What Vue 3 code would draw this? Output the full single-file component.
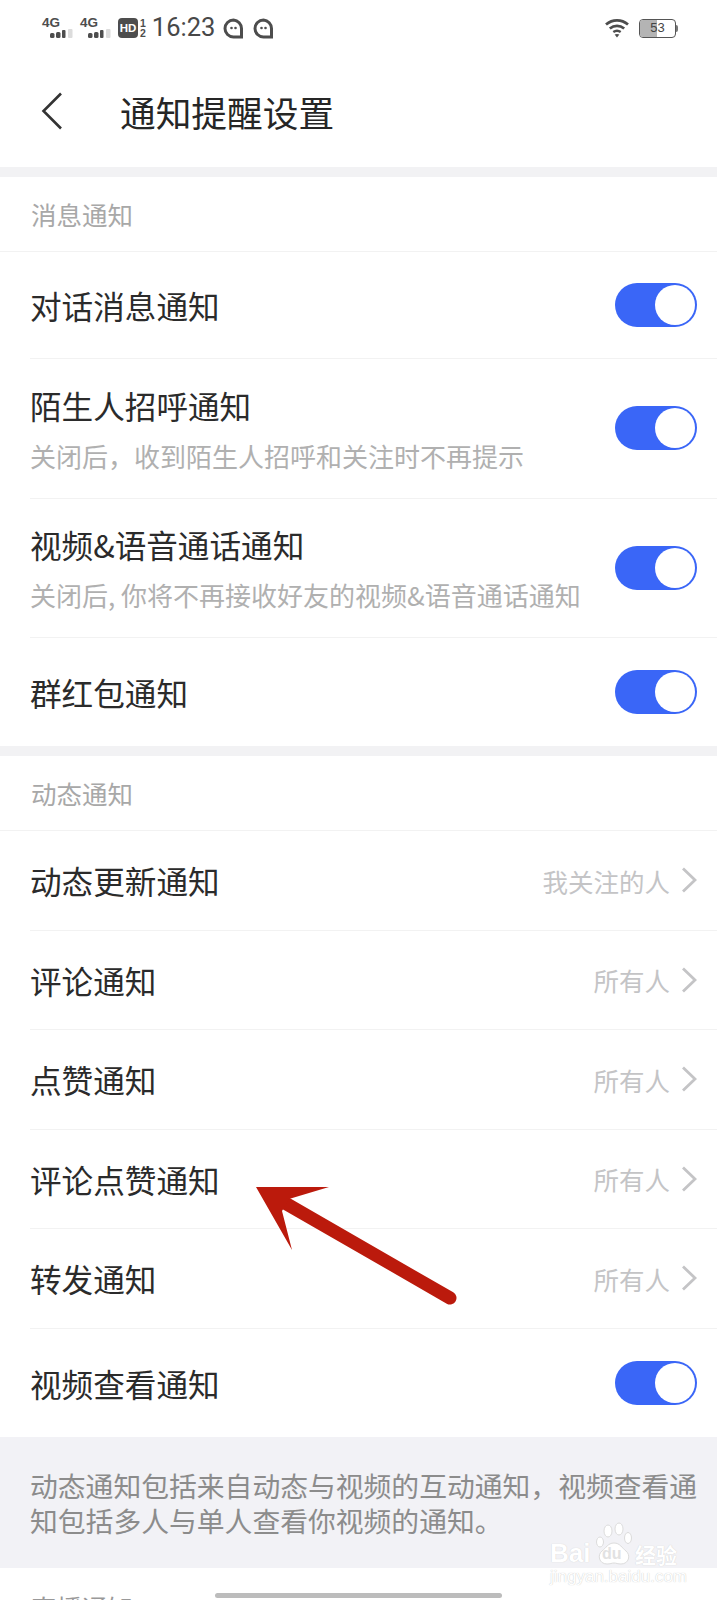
<template>
  <div class="page">
    <!-- Status bar -->
    <div class="status-bar">
      <div class="status-left">
        <div v-for="n in 2" :key="n" class="signal">
          <span class="signal-label">4G</span>
          <svg width="23" height="9" viewBox="0 0 23 9">
            <rect x="0" y="4" width="4.500" height="5" rx="1.500" fill="#4d4d4d" />
            <rect x="6" y="3" width="4.500" height="6" rx="1.500" fill="#4d4d4d" />
            <rect x="12" y="1" width="3.500" height="8" rx="1" fill="#4d4d4d" />
            <rect x="18" y="0" width="4.500" height="9" rx="1" fill="#dcdcdc" />
          </svg>
        </div>
        <span class="hd">HD</span>
        <span class="sim"><span>1</span><span>2</span></span>
        <span class="time">16:23</span>
        <svg v-for="n in 2" :key="'g' + n" class="ghost" width="21" height="21" viewBox="0 0 21 21">
          <path d="M10.500 2a8.500 8.500 0 1 0 0 17h8v-8.500a8.500 8.500 0 0 0-8-8.500z" fill="none" stroke="#4d4d4d" stroke-width="3" />
          <circle cx="8.500" cy="10" r="1.300" fill="#4d4d4d" />
          <circle cx="12.500" cy="10" r="1.300" fill="#4d4d4d" />
        </svg>
      </div>
      <div class="status-right">
        <svg width="24" height="20" viewBox="0 0 24 20">
          <path d="M1 6.500c6.500-5.500 15.500-5.500 22 0" fill="none" stroke="#4d4d4d" stroke-width="2.800" />
          <path d="M4.800 10.500c4.300-3.500 10.100-3.500 14.400 0" fill="none" stroke="#4d4d4d" stroke-width="2.800" />
          <path d="M8.300 14c2.200-1.600 5.200-1.600 7.400 0" fill="none" stroke="#4d4d4d" stroke-width="2.400" />
          <path d="M12 19.500l-2.400-3c1.500-.8 3.300-.8 4.800 0z" fill="#4d4d4d" />
        </svg>
        <div class="battery">
          <div class="battery-body">
            <div class="battery-fill"></div>
            <span class="battery-text">53</span>
          </div>
          <div class="battery-tip"></div>
        </div>
      </div>
    </div>

    <!-- Title bar -->
    <div class="title-bar">
      <svg class="back" width="22" height="38" viewBox="0 0 22 38">
        <path d="M20 1.500L2.500 19 20 36.500" fill="none" stroke="#333" stroke-width="2.600" />
      </svg>
      <span class="title">通知提醒设置</span>
    </div>

    <div class="band"></div>
    <div class="section-head">消息通知</div>
    <div class="rows">
      <div v-for="item in messageRows" :key="item.name" :class="['row', { tall: item.desc }]">
        <div class="row-text">
          <div class="row-name">{{ item.name }}</div>
          <div v-if="item.desc" class="row-desc">{{ item.desc }}</div>
        </div>
        <div class="toggle"><div class="knob"></div></div>
      </div>
    </div>

    <div class="band"></div>
    <div class="section-head">动态通知</div>
    <div class="rows">
      <div v-for="item in feedRows" :key="item.name" class="row short">
        <div class="row-name">{{ item.name }}</div>
        <div class="row-value">
          <span>{{ item.value }}</span>
          <svg width="16" height="26" viewBox="0 0 16 26">
            <path d="M2 1.500L14 13 2 24.500" fill="none" stroke="#c4c4c6" stroke-width="2.800" />
          </svg>
        </div>
      </div>
      <div class="row">
        <div class="row-name">视频查看通知</div>
        <div class="toggle"><div class="knob"></div></div>
      </div>
    </div>

    <div class="note">动态通知包括来自动态与视频的互动通知，视频查看通知包括多人与单人查看你视频的通知。</div>
    <div class="section-last">直播通知</div>

    <!-- Overlays -->
    <svg class="arrow" width="717" height="1600" viewBox="0 0 717 1600">
      <path d="M450 1298L285 1203" stroke="#bb1a0c" stroke-width="13" stroke-linecap="round" fill="none" />
      <path d="M256 1187H329L289 1199L282 1211L292 1250z" fill="#bb1a0c" />
    </svg>
    <div class="home-bar"></div>
    <div class="watermark">
      <div class="wm-main">
        <span class="wm-bai">Bai</span>
        <div class="wm-paw">
          <svg width="40" height="44" viewBox="0 0 40 44">
            <ellipse cx="6" cy="20" rx="3.500" ry="5" fill="#fff" stroke="#dcdcdc" />
            <ellipse cx="14" cy="9" rx="4" ry="6" fill="#fff" stroke="#dcdcdc" />
            <ellipse cx="25" cy="7" rx="4" ry="6" fill="#fff" stroke="#dcdcdc" />
            <ellipse cx="34" cy="16" rx="3.500" ry="5.500" fill="#fff" stroke="#dcdcdc" />
            <path d="M20 21c-6 0-8 5-12 8-5 4-3 13 5 13 3 0 5-1 7-1s4 1 7 1c8 0 10-9 5-13-4-3-6-8-12-8z" fill="#fff" stroke="#dcdcdc" />
          </svg>
          <span class="wm-du">du</span>
        </div>
        <span class="wm-cn">经验</span>
      </div>
      <div class="wm-sub">jingyan.baidu.com</div>
    </div>
  </div>
</template>

<script setup>
const messageRows = [
  { name: '对话消息通知' },
  { name: '陌生人招呼通知', desc: '关闭后，收到陌生人招呼和关注时不再提示' },
  { name: '视频&语音通话通知', desc: '关闭后, 你将不再接收好友的视频&语音通话通知' },
  { name: '群红包通知' }
];

const feedRows = [
  { name: '动态更新通知', value: '我关注的人' },
  { name: '评论通知', value: '所有人' },
  { name: '点赞通知', value: '所有人' },
  { name: '评论点赞通知', value: '所有人' },
  { name: '转发通知', value: '所有人' }
];
</script>

<style>
html, body {
  margin: 0;
  background: #fff;
}
</style>

<style scoped>
.page {
  position: relative;
  width: 717px;
  height: 1600px;
  overflow: hidden;
  background: #fff;
  color: #2b2b2b;
  font-family: "Noto Sans CJK SC", "Noto Sans", sans-serif;
}

.status-bar {
  height: 56px;
  display: flex;
  justify-content: space-between;
  align-items: center;
  padding: 0 39px 0 42px;
  box-sizing: border-box;
}

.status-left,
.status-right {
  display: flex;
  align-items: center;
}

.signal {
  width: 38px;
  height: 22px;
  position: relative;
}

.signal-label {
  position: absolute;
  left: 0;
  top: 0;
  font: bold 13.500px/11px "Liberation Sans", sans-serif;
  color: #4d4d4d;
}

.signal svg {
  position: absolute;
  left: 8px;
  top: 12px;
}

.hd {
  width: 20px;
  height: 20px;
  border-radius: 4px;
  background: #4d4d4d;
  color: #fff;
  font: bold 11.500px/20px "Liberation Sans", sans-serif;
  text-align: center;
}

.sim {
  display: flex;
  flex-direction: column;
  margin-left: 2px;
  font: bold 10.500px/10.500px "Liberation Sans", sans-serif;
  color: #4d4d4d;
}

.time {
  margin-left: 6px;
  font: 25.500px/1 "Roboto", sans-serif;
  color: #484848;
}

.ghost {
  margin-left: 8px;
}

.ghost + .ghost {
  margin-left: 9px;
}

.status-right {
  gap: 10px;
}

.battery {
  display: flex;
  align-items: center;
}

.battery-body {
  position: relative;
  width: 37px;
  height: 19px;
  box-sizing: border-box;
  border: 1.500px solid #555;
  border-radius: 4px;
  overflow: hidden;
}

.battery-fill {
  width: 17px;
  height: 100%;
  background: #b4b4b4;
}

.battery-text {
  position: absolute;
  inset: 0;
  font: 13px/16px "Liberation Sans", sans-serif;
  text-align: center;
  color: #444;
}

.battery-tip {
  width: 2px;
  height: 7px;
  background: #777;
  border-radius: 0 2px 2px 0;
}

.title-bar {
  height: 111px;
  display: flex;
  align-items: center;
  padding-left: 41px;
}

.back {
  margin-top: -2px;
}

.title {
  margin-left: 57px;
  margin-top: -1px;
  font-size: 35.700px;
  color: #262626;
}

.band {
  height: 10px;
  background: #f2f2f4;
}

.section-head {
  height: 75px;
  box-sizing: border-box;
  padding-left: 31px;
  line-height: 73px;
  font-size: 25.500px;
  color: #a8a8a8;
  border-bottom: 1px solid #f2f2f2;
}

.row {
  height: 108px;
  box-sizing: border-box;
  margin-left: 30px;
  padding-right: 20px;
  display: flex;
  align-items: center;
  justify-content: space-between;
  border-bottom: 1px solid #f2f2f2;
}

.row:first-child {
  height: 107px;
}

.row:last-child {
  border-bottom: none;
}

.row.tall {
  height: 139.500px;
}

.row.short {
  height: 99.500px;
}

.row-name {
  font-size: 31.600px;
  line-height: 44px;
  color: #2b2b2b;
}

.row-desc {
  margin-top: 11px;
  font-size: 26px;
  line-height: 36px;
  color: #b0b0b0;
}

.row-value {
  display: flex;
  align-items: center;
  gap: 11px;
  font-size: 25.500px;
  color: #c4c4c6;
}

.toggle {
  width: 82px;
  height: 44px;
  display: flex;
  justify-content: flex-end;
  align-items: center;
  padding-right: 2px;
  box-sizing: border-box;
  border-radius: 22px;
  background: #3a66f7;
}

.knob {
  width: 40px;
  height: 40px;
  border-radius: 50%;
  background: #fff;
}

.note {
  height: 131px;
  box-sizing: border-box;
  padding: 31px 15px 0 30px;
  background: #f2f2f6;
  font-size: 27.800px;
  line-height: 35px;
  color: #8c8c8c;
}

.section-last {
  padding: 21px 0 0 31px;
  font-size: 25.500px;
  line-height: 36px;
  color: #999;
}

.arrow {
  position: absolute;
  left: 0;
  top: 0;
  pointer-events: none;
}

.home-bar {
  position: absolute;
  left: 215px;
  top: 1593px;
  width: 287px;
  height: 5px;
  border-radius: 3px;
  background: #bcbcbc;
}

.watermark {
  position: absolute;
  left: 550px;
  top: 1522px;
  width: 128px;
  color: #fff;
}

.wm-main {
  display: flex;
  align-items: flex-end;
  height: 44px;
  text-shadow: 0 0 1px #c8c8c8;
}

.wm-bai {
  width: 42px;
  font: bold 26px/26px "Liberation Sans", sans-serif;
}

.wm-paw {
  position: relative;
  width: 40px;
  height: 44px;
  margin-left: 2px;
}

.wm-paw svg {
  display: block;
}

.wm-du {
  position: absolute;
  left: 8px;
  bottom: 3px;
  font: bold 16px/18px "Liberation Sans", sans-serif;
  color: #e2e2e2;
  text-shadow: none;
}

.wm-cn {
  margin-left: 1px;
  font: bold 21px/24px "Noto Sans CJK SC", sans-serif;
  white-space: nowrap;
}

.wm-sub {
  margin-top: 3px;
  font: 17px/16px "Liberation Sans", sans-serif;
  color: #fff;
  text-shadow: 0 0 1px #bbb;
  white-space: nowrap;
}
</style>
